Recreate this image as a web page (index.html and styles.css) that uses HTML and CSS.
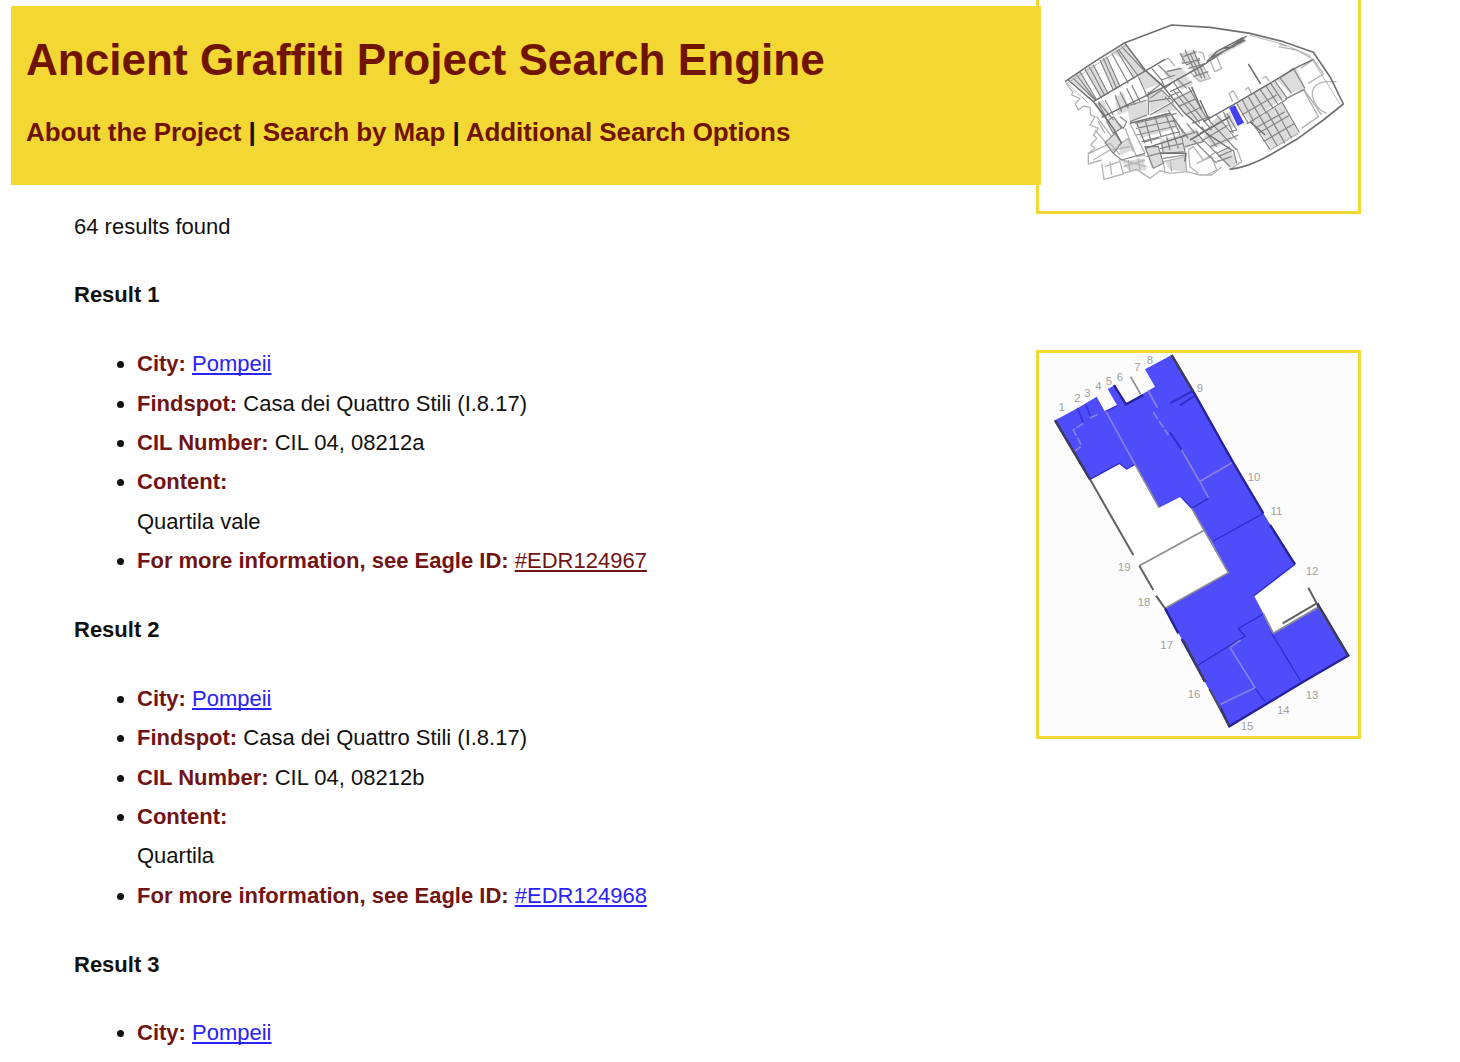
FILE: index.html
```html
<!DOCTYPE html>
<html lang="en">
<head>
<meta charset="utf-8">
<title>Ancient Graffiti Project Search Engine</title>
<link rel="stylesheet" href="styles.css">
</head>
<body>
<div class="page">
  <main class="main">
    <header class="banner">
      <h1 class="title">Ancient Graffiti Project Search Engine</h1>
      <nav class="nav"><a href="#">About the Project</a> | <a href="#">Search by Map</a> | <a href="#">Additional Search Options</a></nav>
    </header>
    <section class="results">
      <p class="count">64 results found</p>
      <h4 class="heading">Result 1</h4>
      <ul class="fields">
        <li><b>City:</b> <a href="#">Pompeii</a></li>
        <li><b>Findspot:</b> Casa dei Quattro Stili (I.8.17)</li>
        <li><b>CIL Number:</b> CIL 04, 08212a</li>
        <li><b>Content:</b><br>Quartila vale</li>
        <li><b>For more information, see Eagle ID:</b> <a class="seen" href="#">#EDR124967</a></li>
      </ul>
      <h4 class="heading">Result 2</h4>
      <ul class="fields">
        <li><b>City:</b> <a href="#">Pompeii</a></li>
        <li><b>Findspot:</b> Casa dei Quattro Stili (I.8.17)</li>
        <li><b>CIL Number:</b> CIL 04, 08212b</li>
        <li><b>Content:</b><br>Quartila</li>
        <li><b>For more information, see Eagle ID:</b> <a href="#">#EDR124968</a></li>
      </ul>
      <h4 class="heading">Result 3</h4>
      <ul class="fields">
        <li><b>City:</b> <a href="#">Pompeii</a></li>
      </ul>
    </section>
  </main>
  <aside class="maps">
    <div class="map map-city">
      <svg width="319" height="211" viewBox="27 0 957 633" fill="none" stroke-linejoin="round">
        <!-- shaded blocks -->
        <g fill="#777" opacity=".26">
          <path d="M118 240L150 215L194 300ZM165 208L190 192L235 282L215 292ZM210 180L230 168L272 260L253 272ZM245 157L287 130L350 210L310 232L290 185ZM255 290L280 278L300 330L262 347ZM325 228L352 213L395 250L345 268ZM355 275L392 265L420 305L360 340ZM290 320L350 300L352 350L300 365Z"/>
          <path d="M400 320L430 305L445 330L360 345ZM435 240L465 225L490 250L455 270ZM430 295L480 270L530 355L495 370ZM320 370L420 345L440 385L330 415ZM390 420L450 405L468 450L400 460ZM345 445L385 435L400 490L365 505ZM460 415L500 400L515 425L465 445ZM230 365L260 355L275 385L250 400ZM225 428L255 400L275 428L250 460Z"/>
          <path d="M450 160L490 150L535 235L510 245ZM535 165L640 110L650 125L540 185ZM545 365L570 345L595 395L610 420L550 445L520 410ZM560 465L600 440L620 490L600 505ZM620 310L735 240L765 290L660 365ZM740 240L800 205L825 265L780 280ZM665 360L755 310L805 400L725 445ZM275 485L340 475L350 510L300 515ZM405 485L470 470L470 515L420 510Z"/>
          <path d="M400 215L450 200L470 220L420 245ZM195 310L215 350L245 350L220 300ZM580 345L600 335L620 380L600 385ZM270 435L295 415L310 450L270 465ZM440 405L500 385L510 400L450 425Z"/>
        </g>
        <!-- faint property lines -->
        <g stroke="#b4b4b4" stroke-width="4">
          <path d="M108 250L128 275L125 285L150 295L136 312L145 330L160 318L180 322L182 345L195 350L180 375L205 385L190 405L200 415L182 435L195 445L175 460L175 492L215 480M200 350L245 410M215 490L222 538L280 522L268 478M240 485L245 525M280 520L320 508L360 535L390 512L420 520L470 515L510 525L545 525L575 500M178 460L240 430L270 465M190 480L240 450"/>
          <path d="M285 385L320 470L345 465M300 370L345 460M275 480L350 500M280 500L345 480M475 450L490 440L520 480L560 455M475 450L480 500L505 520M500 490L545 470L560 510L530 525M597 280L610 272L625 300M597 280L608 305M645 270L655 262L664 280M697 235L708 230L718 245M745 140L800 150L840 172M748 132L770 138"/>
          <path d="M765 298L820 268L865 350L815 385M822 268L875 345M812 205L850 178L880 222L835 250M895 245C860 245 845 265 847 285C850 310 865 330 890 340M920 245L895 245M620 445L635 485L605 505M390 185L415 175L435 198M455 160L460 190M505 155L520 160L525 180M540 180L560 170L575 205L555 215L540 180M720 450L805 400M480 215L510 245L540 235L515 190"/>
          <path d="M405 520L400 485L465 470L470 515M425 515L420 480M300 515L295 480M330 510L325 475M225 500L268 485M195 390L230 430M205 365L225 400M245 450L300 440M265 435L295 415L310 455"/>
        </g>
        <!-- block edges -->
        <g stroke="#858585" stroke-width="3.6">
          <path d="M130 235L195 300M150 215L200 300M165 208L215 295M190 195L235 282M210 180L250 270M230 170L270 260M245 160L295 250M260 150L312 235M275 140L345 215M140 225L198 302M178 200L225 288M220 175L260 265M265 148L325 228"/>
          <path d="M205 310L230 355M225 300L250 345M255 285L275 335M270 275L295 325M290 265L315 315M305 255L330 305M325 230L352 290M350 215L405 265L395 240L435 225M365 205L395 240M385 195L425 235M405 265L430 245L450 275L415 290M440 235L470 265M355 275L355 345M360 295L395 270L430 305L360 345M355 305L420 295M395 250L350 285M195 310L240 370M205 305L250 360"/>
          <path d="M315 370L440 340M318 385L440 360M320 405L440 378M335 425L450 395M320 370L345 430M345 360L365 430M375 350L395 415M405 340L430 400M345 440L370 505L400 490L385 440ZM395 430L400 460L465 455L455 410M400 475L465 465M390 445L460 430M410 410L420 450M430 400L445 445M345 425L395 412M425 345L450 405M350 470L395 458"/>
          <path d="M430 300L490 270M445 320L500 295M465 345L515 320M485 370L540 350M450 275L545 390M475 260L530 355M450 160L470 195L510 175M465 150L500 225M490 150L525 235M460 170L500 155M455 190L510 180M475 205L530 190M490 230L535 215M430 270L510 370M405 290L460 350M420 275L485 245M480 160L515 235M420 340L475 415M410 215L455 205"/>
          <path d="M540 365L620 450M560 345L620 420M515 380L560 440M500 400L560 460L600 440M520 420L595 375M540 440L625 405M565 470L610 450L620 490M560 460L600 500M455 410L500 395L520 425L465 440M415 330L460 400M470 370L495 400M490 420L560 490M510 400L600 350M560 485L605 470M580 335L610 400"/>
          <path d="M620 310L655 370M637 300L672 365M655 290L690 350M673 280L710 340M690 268L730 325M708 258L745 315M722 250L757 302M735 243L770 293M750 233L785 280M635 345L740 285M665 365L720 448M690 350L742 438M712 338L765 430M735 325L785 415M755 305L808 398M685 400L780 345M700 425L795 370M755 230L790 205L825 265M765 298L825 268M650 372L770 298M675 385L765 335"/>
          <path d="M225 428L255 400L275 428L250 460ZM230 365L250 350L275 385L250 400ZM270 350L290 365L280 385L265 370M285 320L350 300M300 365L350 345M250 460L275 480L345 460M590 340L620 390L600 395"/>
        </g>
        <!-- streets -->
        <g stroke="#707070" stroke-width="4.4">
          <path d="M190 305L405 178M215 352L400 262L520 195L650 108M285 130L345 210L400 260L460 335L530 400L605 450M115 240L190 305L250 385L275 430M300 370L420 340M520 365L600 320L740 238L800 202L850 178M530 185L560 155L640 112M540 175L645 120M580 145L610 140L640 118M655 192L692 252M345 445L470 405M390 460L468 460L465 485M660 365L705 405M540 365L510 300M485 260L515 330M480 420L600 350"/>
        </g>
        <path stroke="#707070" stroke-width="5" d="M105 245L190 187L285 128L425 75L540 82L660 100L760 125L850 157L900 230L940 312L880 360L800 418L720 465Q655 502 598 508"/>
        <path stroke="#999" stroke-width="2" d="M112 250L288 136M660 106L760 133L838 165L930 312M105 245L125 262L175 310"/>
        <path fill="#4441f0" d="M597 323L615 316L642 368L623 378Z"/>
      </svg>
    </div>
    <div class="map map-block">
      <svg width="319" height="383" viewBox="27 24 957 1149" fill="none">
        <path fill="#fff" d="M180 403L315 358L387 488L485 490L595 683L405 790ZM672 752L795 658L862 785L730 865Z"/>
        <path fill="#4e4cfb" d="M75 226L145 188L200 155L225 200L262 182L233 132L255 120L288 176L375 125L345 73L425 30L490 140L608 350L700 505L795 658L672 752L700 805L730 865L862 785L955 932L820 1010L598 1144L535 1030L500 965L405 790L595 683L545 590L520 555L485 490L452 455L387 488L315 358L290 372L268 355L180 403Z"/>
        <!-- inner walls -->
        <g stroke="#302dcc" stroke-width="4">
          <path d="M142 188L160 232M168 180L182 215M225 200L262 182M485 490L535 460M550 588L700 505M500 963L645 873L625 850L698 808M725 865L812 1008M675 1030L705 1070M452 455L485 490M180 403L268 355L290 372L315 358M672 752L795 658"/>
          <path stroke-width="6" d="M420 175L488 138M450 181L495 152M420 262L465 330"/>
        </g>
        <g stroke="#8582dc" stroke-width="5">
          <path d="M228 200L315 358M355 138L382 188M508 410L608 352M510 410L535 458M455 315L508 408M600 908L675 1028L572 1078M600 908L632 885"/>
          <path d="M160 235L130 255L155 302L135 318M370 202L415 270M180 218L205 208" stroke-dasharray="24 7"/>
        </g>
        <g stroke="#8c8c98" stroke-width="5">
          <path d="M315 358L387 488M485 490L595 683L405 790M328 662L520 557M302 95L332 148M700 805L730 865L862 788"/>
        </g>
        <!-- outer walls -->
        <path stroke="#25229c" stroke-width="7" d="M75 226L180 403M425 30L490 140L608 350L700 505M720 540L795 658M862 775L955 932L820 1010L598 1144L572 1090M405 790L445 865M455 882L525 1010M252 120L288 178L340 150"/>
        <path stroke="#444" stroke-width="6" d="M75 226L180 403L310 630M328 662L370 735M378 752L405 790M460 885L525 1010M538 1032L598 1144M835 728L860 775L758 835M425 30L490 140M862 780L955 932" stroke-opacity=".85"/>
        <g class="lots">
          <text x="95" y="199">1</text><text x="142" y="170">2</text><text x="172" y="156">3</text><text x="205" y="136">4</text><text x="237" y="120">5</text><text x="270" y="109">6</text><text x="322" y="78">7</text><text x="360" y="57">8</text><text x="510" y="140">9</text>
          <text x="672" y="408">10</text><text x="739" y="510">11</text><text x="846" y="690">12</text><text x="846" y="1062">13</text><text x="760" y="1108">14</text><text x="651" y="1156">15</text><text x="492" y="1058">16</text><text x="410" y="913">17</text><text x="342" y="782">18</text><text x="283" y="677">19</text>
        </g>
      </svg>
    </div>
  </aside>
</div>
</body>
</html>
```
FILE: styles.css
```css
* { box-sizing: border-box; }

body {
  margin: 0;
  height: 1062px;
  overflow: hidden;
  background: #fff;
  color: #111;
  font: 22px/39.4px "Liberation Sans", Arial, sans-serif;
}

.page {
  display: flex;
  align-items: flex-start;
  padding-left: 11px;
}

.main {
  position: relative;
  z-index: 1;
  width: 1030px;
  padding-top: 6px;
}

.banner {
  height: 179px;
  padding: 29px 15px 0;
  background: #f3d733;
}

.title {
  margin: 0;
  color: #701400;
  font-size: 44.1px;
  line-height: 50px;
}

.nav {
  margin-top: 32px;
  font-size: 26px;
  font-weight: bold;
  letter-spacing: -0.08px;
  line-height: 30px;
}

.nav a {
  color: #701400;
  text-decoration: none;
}

.results { padding: 21.5px 0 0 63px; }

.count,
.heading {
  margin: 0 0 29.4px;
  font-size: 22px;
}

.fields {
  margin: 0 0 29.4px;
  padding-left: 63px;
}

.fields b { color: #701414; }

.fields a {
  color: #2a22f8;
  text-decoration-skip-ink: none;
}

.fields a.seen { color: #701414; }

.maps {
  display: flex;
  flex-direction: column;
  gap: 136px;
  width: 325px;
  margin-left: -5px;
}

.map { border: 3px solid #f3d733; }

.map-city { border-top: 0; }

.map-block { background: #fcfcfc; }

.map svg { display: block; }

.lots {
  fill: #a0a0a0;
  font-size: 34px;
  text-anchor: middle;
}
```
